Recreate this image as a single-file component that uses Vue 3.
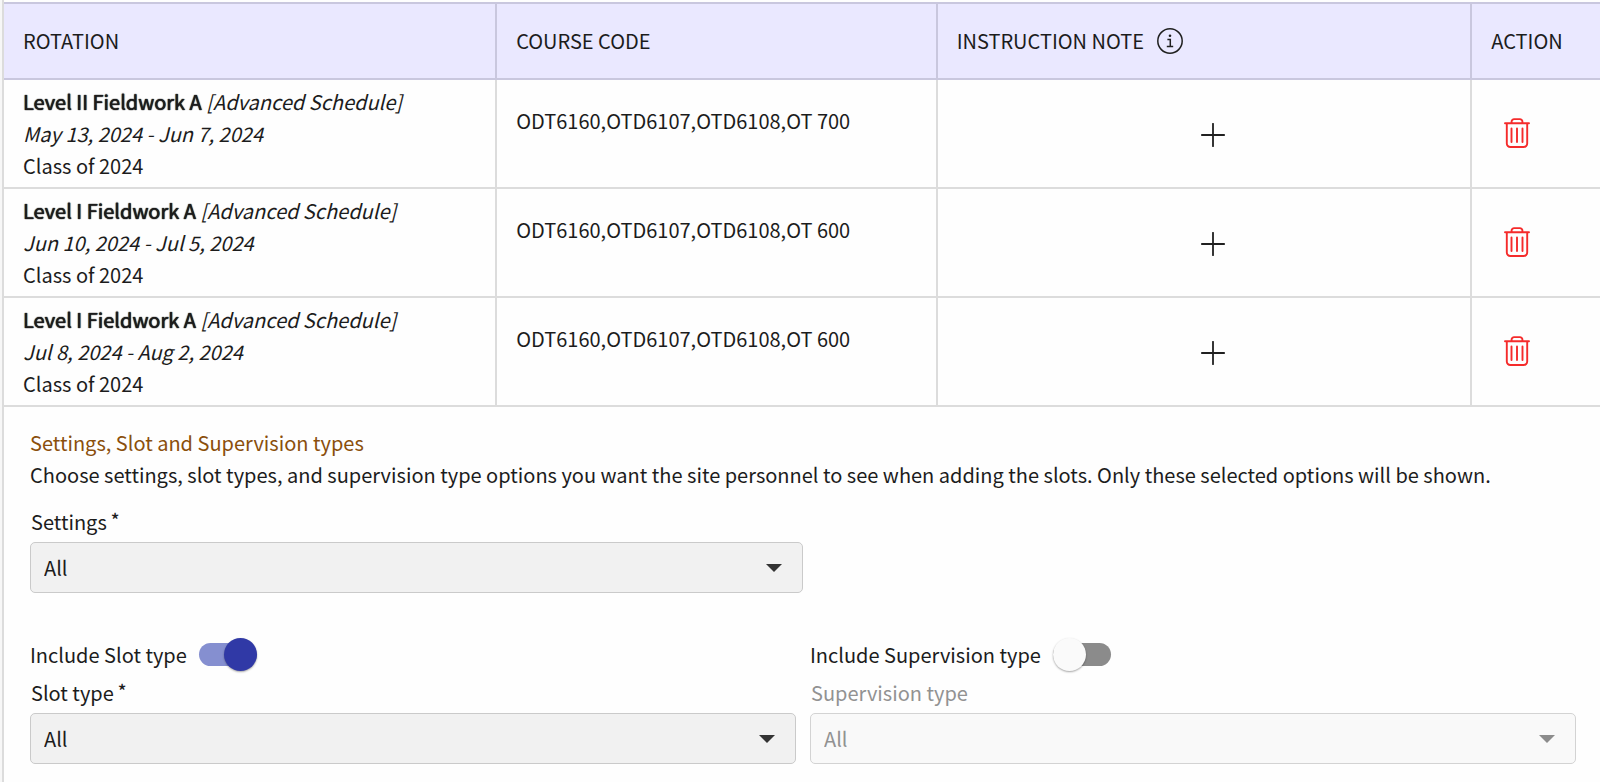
<script setup>
import { ref } from 'vue'

const rotations = [
  { name: 'Level II Fieldwork A', dates: 'May 13, 2024 - Jun 7, 2024', group: 'Class of 2024', codes: 'ODT6160,OTD6107,OTD6108,OT 700' },
  { name: 'Level I Fieldwork A', dates: 'Jun 10, 2024 - Jul 5, 2024', group: 'Class of 2024', codes: 'ODT6160,OTD6107,OTD6108,OT 600' },
  { name: 'Level I Fieldwork A', dates: 'Jul 8, 2024 - Aug 2, 2024', group: 'Class of 2024', codes: 'ODT6160,OTD6107,OTD6108,OT 600' },
]

const includeSlot = ref(true)
const includeSupervision = ref(false)
</script>

<template>
  <main class="panel">
    <table class="rotations">
      <colgroup>
        <col class="col-rotation" />
        <col class="col-course" />
        <col class="col-note" />
        <col class="col-action" />
      </colgroup>
      <thead>
        <tr>
          <th scope="col">ROTATION</th>
          <th scope="col">COURSE CODE</th>
          <th scope="col">
            <div class="note-head">
              <span>INSTRUCTION NOTE</span>
              <svg class="info" viewBox="0 0 26 26" aria-hidden="true">
                <circle cx="13" cy="13" r="12.2" />
                <path d="M10.4 11.4h2.9v6.9M9.8 18.4h6.4" />
                <circle class="dot" cx="13" cy="7.7" r="1.3" />
              </svg>
            </div>
          </th>
          <th scope="col">ACTION</th>
        </tr>
      </thead>
      <tbody>
        <tr v-for="(row, i) in rotations" :key="i">
          <td>
            <div><strong>{{ row.name }}</strong> <em>[Advanced Schedule]</em></div>
            <div><em>{{ row.dates }}</em></div>
            <div>{{ row.group }}</div>
          </td>
          <td class="codes">{{ row.codes }}</td>
          <td class="note">
            <button type="button" class="icon-button" aria-label="Add instruction note">
              <svg class="plus" viewBox="0 0 24 24" aria-hidden="true">
                <path d="M12 .8v22.4M.8 12h22.4" />
              </svg>
            </button>
          </td>
          <td class="action">
            <button type="button" class="icon-button" aria-label="Delete rotation">
              <svg class="trash" viewBox="0 0 26 30" aria-hidden="true">
                <path d="M1 5.2h24M2.8 5.2v20.3a3.5 3.5 0 0 0 3.5 3.5h13.4a3.5 3.5 0 0 0 3.5-3.5V5.2M7.6 5V3.6a2.5 2.5 0 0 1 2.5-2.500h5.800a2.500 2.500 0 0 1 2.500 2.500V5M7.500 10.500v13.500M13 10.500v13.500M18.500 10.500v13.500" />
              </svg>
            </button>
          </td>
        </tr>
      </tbody>
    </table>

    <section class="options">
      <h2>Settings, Slot and Supervision types</h2>
      <p>Choose settings, slot types, and supervision type options you want the site personnel to see when adding the slots. Only these selected options will be shown.</p>

      <div class="field half">
        <label for="settings">Settings<span class="star">*</span></label>
        <div class="select-box">
          <select id="settings"><option>All</option></select>
          <svg class="caret" viewBox="0 0 16 8" aria-hidden="true"><path d="M0 0h16L8 8z" /></svg>
        </div>
      </div>

      <div class="columns">
        <div>
          <div class="switch-row">
            <label for="include-slot">Include Slot type</label>
            <input id="include-slot" v-model="includeSlot" type="checkbox" role="switch" class="switch" />
          </div>
          <div class="field" :class="{ disabled: !includeSlot }">
            <label for="slot-type">Slot type<span v-if="includeSlot" class="star">*</span></label>
            <div class="select-box">
              <select id="slot-type" :disabled="!includeSlot"><option>All</option></select>
              <svg class="caret" viewBox="0 0 16 8" aria-hidden="true"><path d="M0 0h16L8 8z" /></svg>
            </div>
          </div>
        </div>
        <div>
          <div class="switch-row">
            <label for="include-supervision">Include Supervision type</label>
            <input id="include-supervision" v-model="includeSupervision" type="checkbox" role="switch" class="switch" />
          </div>
          <div class="field" :class="{ disabled: !includeSupervision }">
            <label for="supervision-type">Supervision type<span v-if="includeSupervision" class="star">*</span></label>
            <div class="select-box">
              <select id="supervision-type" :disabled="!includeSupervision"><option>All</option></select>
              <svg class="caret" viewBox="0 0 16 8" aria-hidden="true"><path d="M0 0h16L8 8z" /></svg>
            </div>
          </div>
        </div>
      </div>
    </section>
  </main>
</template>

<style>
body {
  background: #f7f7f7;
}
</style>

<style scoped>
.panel {
  box-sizing: border-box;
  min-height: 100vh;
  margin-left: 2px;
  padding-top: 2px;
  border-left: 2px solid #dcdcdc;
  background: #fefefe;
  color: #1c1c1c;
  font-family: "Noto Sans CJK SC", "Noto Sans", sans-serif;
  font-size: 20px;
  line-height: 32px;
}

.rotations {
  width: 100%;
  table-layout: fixed;
  border-collapse: separate;
  border-spacing: 0;
}
.col-rotation { width: 30.9%; }
.col-course { width: 27.6%; }
.col-note { width: 33.5%; }
.col-action { width: 8%; }

th,
td {
  box-sizing: border-box;
  border: 0 solid #dcdcdc;
  border-right-width: 2px;
  border-bottom-width: 2px;
  padding: 6px 19px 5px;
  text-align: left;
  vertical-align: top;
  white-space: nowrap;
}
th {
  height: 78px;
  padding-bottom: 7px;
  border-color: #c9c7de;
  border-top-width: 2px;
  background: #eae8ff;
  font-weight: 400;
  vertical-align: middle;
}
th:last-child,
td:last-child {
  border-right-width: 0;
}
strong {
  font-weight: 400;
  text-shadow: 0 0 1px currentColor, 0 0 1px currentColor;
}
td.codes { padding-top: 25px; }
td.note {
  padding-left: 37px;
  padding-bottom: 7px;
  text-align: center;
  vertical-align: middle;
}
td.action {
  padding-left: 29px;
  padding-bottom: 7px;
  vertical-align: middle;
}

.note-head {
  display: flex;
  align-items: center;
  gap: 13px;
}
svg {
  display: block;
  fill: none;
  stroke: #202020;
}
.info {
  width: 26px;
  height: 26px;
  stroke-width: 1.5;
}
.info .dot {
  fill: #202020;
  stroke: none;
}
.icon-button {
  display: inline-block;
  padding: 3px;
  border: 0;
  background: none;
  cursor: pointer;
  vertical-align: middle;
}
.plus {
  width: 24px;
  height: 24px;
  stroke-width: 1.8;
  stroke-linecap: round;
}
.trash {
  width: 26px;
  height: 30px;
  stroke: #f52b2b;
  stroke-width: 1.9;
  stroke-linecap: round;
}

.options {
  padding: 20px 24px 18px 26px;
}
h2,
p {
  margin: 0;
  font-size: inherit;
  font-weight: 400;
}
h2 { color: #8a4f0c; }
p { margin-bottom: 15px; }

.field label {
  display: block;
  padding-left: 1px;
  margin-bottom: 4px;
}
.half { width: 50%; }
.star {
  margin-left: 4px;
  font-size: 18px;
  font-weight: 500;
  line-height: 1;
  vertical-align: 3px;
}
.select-box {
  display: grid;
  align-items: center;
}
.select-box > * { grid-area: 1 / 1; }
select {
  width: 100%;
  height: 51px;
  padding: 0 48px 0 13px;
  border: 1px solid #cacaca;
  border-radius: 5px;
  appearance: none;
  background: #f1f1f1;
  color: inherit;
  font: inherit;
}
.caret {
  justify-self: end;
  width: 16px;
  height: 8px;
  margin-right: 21px;
  fill: #333;
  stroke: none;
  pointer-events: none;
}
.disabled { color: #929292; }
.disabled select {
  border-color: #d3d3d3;
  background: #f9f9f9;
  opacity: 1;
}
.disabled .caret { fill: #8c8c8c; }

.columns {
  display: grid;
  grid-template-columns: 1fr 1fr;
  gap: 14px;
  margin-top: 45px;
}
.switch-row {
  display: flex;
  align-items: center;
  gap: 12px;
  height: 33px;
  margin-bottom: 6px;
}
.switch {
  display: flex;
  align-items: center;
  width: 58px;
  height: 23px;
  margin: 0;
  border-radius: 12px;
  appearance: none;
  background: #8b8b8b;
  cursor: pointer;
}
.switch::before {
  content: "";
  width: 33px;
  height: 33px;
  flex: none;
  border-radius: 50%;
  background: #fafafa;
  box-shadow: 0 1px 2px rgba(0, 0, 0, 0.35);
}
.switch:checked {
  justify-content: flex-end;
  background: #858fd0;
}
.switch:checked::before { background: #3039a6; }
</style>
